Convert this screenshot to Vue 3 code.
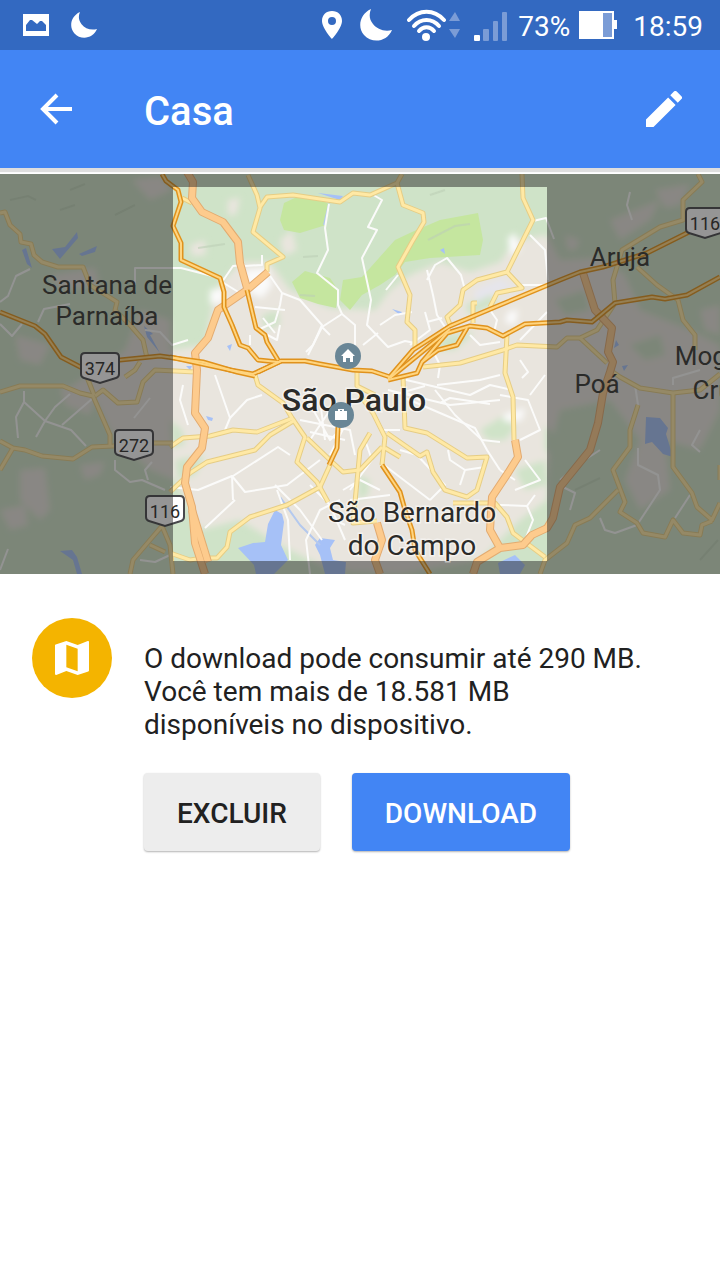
<script setup>
import { ref } from "vue";

const title = ref("Casa");
const downloadSize = ref("290 MB");
const freeSpace = ref("18.581 MB");

// main highways, dark orange casing
const motorways = [
  "M162 174L166 181L178 190L181 202L173 226L181 243V260L220 278L224 292V307L232 325L240 345L248 348L258 360L278 362",
  "M247 290L256 328L265 335L267 342L278 360",
  "M0 312L35 326L45 334L61 357L90 372L120 360L160 356L203 362L237 372L255 376",
  "M170 357L230 370L253 374L281 361H305L320 364L353 370L372 371L390 377",
  "M258 372L281 361",
  "M388 379L413 350L450 326L500 305L560 280L580 272L603 267L647 253L687 233L720 215",
  "M390 378L450 329",
  "M388 380L417 373L422 362L447 333L470 326L487 328L503 336L525 324L560 322L567 320L592 322L615 303L652 297L665 299L687 295L720 277",
  "M467 328L457 345L438 350L422 362",
  "M382 465L400 492L405 510L412 530L415 550L430 574",
  "M338 427L337 448L329 465",
];

const trunks = [
  "M187 172L193 182L192 198L202 212L223 222L238 242L240 263L247 288",
  "M268 272L247 290L218 310L208 338L195 353L197 370L195 413L205 428L202 448L187 467L185 483L192 507L195 543L205 574",
  "M192 510L208 562",
  "M515 440L518 457L508 473L492 497L490 530L500 548",
  "M473 574L477 562L500 548L523 545L532 535L547 528L553 518L560 487L590 450L598 423L603 393L610 372L613 362L608 352L612 328L595 310L583 273",
  "M377 523L382 540L375 560L380 574",
];

const avenues = [
  "M0 213L5 212L10 225L20 234L21 242L31 244L34 255L42 262L58 267H83L90 285L117 302L115 310L130 325L143 340L147 358",
  "M248 175L257 195L260 208L253 232L283 257L267 264V272",
  "M260 207L267 197L293 195L340 202L353 193L370 195L397 183L402 174",
  "M397 183L403 205L423 213L424 222L412 242L398 267L410 295L407 322L415 330V350",
  "M522 174L523 198L533 220L507 272L477 280L463 290L460 305L447 317L450 325",
  "M507 272L522 288L497 293L490 307",
  "M477 303H473V323",
  "M423 367L460 363L503 350L517 345L557 347L567 338H580L597 330L615 303L613 280L622 250L660 227L683 220V200L702 182L698 174",
  "M637 267L657 285L678 300L683 320L695 335V350",
  "M580 338L607 363",
  "M182 198L192 203",
  "M507 335L505 373L513 397L514 440",
  "M403 377L405 428L427 433L467 458L487 457L477 490L467 497L445 490L433 472L427 452L420 456L387 433",
  "M360 395L373 413L385 437L382 465",
  "M382 447L360 470L343 472L330 460L307 438",
  "M385 448L400 457",
  "M453 503H495L507 517L513 533L545 557",
  "M170 447L183 438L210 436L233 430L257 432L293 418",
  "M170 492L190 473L207 462L255 450L270 435L295 420",
  "M255 375L258 385L283 403L292 418L305 437L297 462L317 482L328 502",
  "M330 465L320 487L287 505L250 517L230 532L227 547L217 558H203L190 560L170 553",
  "M370 433L360 450L353 523L377 521",
  "M357 370V386L375 395",
  "M0 392L20 386H63L80 393L93 396L110 435V447",
  "M95 396L103 390L118 403L137 402L143 382L155 370L195 372",
  "M0 441L13 448L25 450L42 456L73 459L92 447L113 446L153 443L173 443",
  "M13 448L0 470",
  "M85 372L94 395M125 377L135 370L140 362",
  "M130 574L133 560L150 540L162 526L170 545L173 574M150 545L165 552",
  "M610 370L620 377L640 388L673 393L700 390L720 374",
  "M673 393V467L692 493L697 507L712 520L720 503M720 465V480",
  "M712 521L702 525L700 535L683 533L673 520L665 537L643 533L637 523L620 512L625 502L613 470L630 447V430L638 405",
  "M618 490L590 518L575 525L567 543L545 560L540 574",
];

const streets = [
  "M0 302L8 296L16 276L30 269M0 324L12 336L22 324M38 322L44 309L70 304",
  "M135 285V268H181L220 278M145 330L160 332L172 345L188 340",
  "M24 391V402L45 421L36 437M24 402L16 417L18 438M45 421L55 407L70 394M45 421L71 430L86 446M62 425L93 398",
  "M115 460V470L130 482L142 480L165 490M152 462L145 470L148 480M134 418L150 398",
  "M183 385L180 400L188 425M215 375L222 395L230 418L225 430M230 418L247 400L262 395",
  "M170 487L198 490L232 476L245 492L287 485L320 460M232 476L233 500M233 476L278 447L290 455",
  "M205 528L235 500M275 485L300 510L322 540M277 490L288 520L290 560M340 500L320 510L306 540L310 574",
  "M222 282L233 266L245 265M245 266L262 265L262 255M222 282L240 293M268 273L282 293L300 300L322 325L313 345L306 352",
  "M282 293L280 305L275 322L258 330M258 330L277 340L280 325M285 310L255 307M263 318L275 333M250 335V345",
  "M329 204L325 228L328 250L317 273L338 290V305L342 314L355 325V345L348 355M342 314L322 327L330 335M322 327L308 355",
  "M370 193L382 200L368 227L377 230L362 258L371 300L367 325L388 347L405 341L415 343M380 325L395 315L412 312M363 345L378 333",
  "M427 280L435 265L447 258L461 275L465 290M398 275L386 290M427 270L433 295L437 315L445 327M425 312L430 330L410 345M427 322L442 318",
  "M530 235L545 250L548 280M533 221L546 218L554 239M522 285H547M490 310L497 320L494 332M547 312L520 340",
  "M388 390L450 405L500 400M398 378L470 395L490 385L512 390M440 403L450 398L490 404M393 395L425 386M405 398L475 428L487 450L500 470",
  "M435 390L455 415L482 440L500 442M400 430L384 430M448 450L450 460L465 470L485 467M465 470L460 485M400 450L417 455L445 485L430 500M384 465L430 500",
  "M500 395L528 400L540 430L520 440M525 460L540 480L515 490M500 505L527 506L535 495M527 506L533 520L525 540M500 470L515 480M545 375L530 395",
  "M305 395L330 440L350 420M320 400L325 440M300 420L350 430L355 455M310 432L345 440M330 410L310 440M345 425L330 455",
  "M343 490L360 480L380 490M310 485L330 505L345 540M335 520L345 525M350 500L390 495M365 440L372 460L350 490",
  "M630 192L627 205L632 220M600 450L580 463L560 480M563 487L575 493L570 510M600 518L605 530L615 533L637 525L660 490L658 475L638 465V448M638 405L635 385M673 385V378L700 370M675 518L690 495M700 430L692 445L700 452",
  "M140 560L155 562L170 555M0 570L8 549M430 345L440 365L438 378M470 335L480 345L500 342M520 360L528 372L522 378M437 385L480 380L500 375M405 392L420 400",
];

const labels = [
  { x: 107, y: 294, text: "Santana de" },
  { x: 107, y: 325, text: "Parnaíba" },
  { x: 620, y: 266, text: "Arujá" },
  { x: 597, y: 393, text: "Poá" },
  { x: 704, y: 365, text: "Mogi" },
  { x: 719, y: 399, text: "Cruz" },
];

const shields = [
  { x: 100, y: 368, text: "374" },
  { x: 134, y: 445, text: "272" },
  { x: 165, y: 511, text: "116" },
  { x: 705, y: 223, text: "116" },
];
</script>

<template>
  <div class="screen">
    <div class="status-bar">
      <svg class="picture-icon" width="26" height="22" viewBox="0 0 26 22">
        <path fill="#fff" fill-rule="evenodd" d="M0 0H26V22H0ZM3 17H23V11L19 7H17L14 10L9 6H7L3 11Z" />
      </svg>
      <svg class="small-moon" width="26" height="26" viewBox="0 0 32 32">
        <path fill="#fff" d="M11 0C0 5-3 18 4 26C12 35 27 33 32 21C24 23 17 20 13 15C9 10 9 5 11 0Z" />
      </svg>
      <svg class="pin-icon" width="20" height="28" viewBox="0 0 20 28">
        <path fill="#fff" fill-rule="evenodd" d="M10 0C4 0 0 4 0 10C0 17 10 28 10 28S20 17 20 10C20 4 16 0 10 0ZM10 6A4 4 0 1 1 10 14A4 4 0 1 1 10 6Z" />
      </svg>
      <svg class="moon-icon" width="32" height="32" viewBox="0 0 32 32">
        <path fill="#fff" d="M11 0C0 5-3 18 4 26C12 35 27 33 32 21C24 23 17 20 13 15C9 10 9 5 11 0Z" />
      </svg>
      <svg class="wifi-icon" width="54" height="32" viewBox="0 0 54 32">
        <g fill="none" stroke="#fff" stroke-width="4" stroke-linecap="round">
          <path d="M2 11C12 0 27 0 37 11" />
          <path d="M7 17C14 9 25 9 32 17" />
          <path d="M12 22C16 17 23 17 27 22" />
        </g>
        <circle cx="19" cy="28" r="4" fill="#fff" />
        <path fill="#7b9cd6" d="M42 12L48 3L53 12ZM42 20H53L48 29Z" />
      </svg>
      <svg class="signal-icon" width="34" height="30" viewBox="0 0 34 30">
        <rect x="0" y="23" width="6" height="6" rx="1" fill="#fff" />
        <g fill="#7b9cd6">
          <rect x="9" y="17" width="6" height="12" rx="1" />
          <rect x="19" y="9" width="5" height="20" rx="1" />
          <rect x="28" y="0" width="5" height="29" rx="1" />
        </g>
      </svg>
      <span class="percent">73%</span>
      <svg class="battery-icon" width="38" height="28" viewBox="0 0 38 28">
        <rect x="1" y="1" width="33" height="26" fill="#7b9cd6" stroke="#fff" stroke-width="2" />
        <path fill="#fff" d="M0 0H24V28H0ZM34 9H38V18H34Z" />
      </svg>
      <span class="clock">18:59</span>
    </div>

    <header class="toolbar">
      <button class="icon-button" type="button" aria-label="Voltar">
        <svg width="32" height="32" viewBox="0 0 32 32">
          <path fill="none" stroke="#fff" stroke-width="4" d="M32 16H3M17 2L3 16L17 30" />
        </svg>
      </button>
      <h1>{{ title }}</h1>
      <button class="icon-button" type="button" aria-label="Editar">
        <svg width="36" height="36" viewBox="3 3 18 18">
          <path fill="#fff" d="M3 17.25V21h3.750L17.810 9.940l-3.750-3.750L3 17.250zM20.710 7.040a1 1 0 0 0 0-1.410l-2.340-2.340a1 1 0 0 0-1.410 0l-1.830 1.830 3.750 3.750 1.830-1.830z" />
        </svg>
      </button>
    </header>

    <svg class="map" viewBox="0 174 720 400" preserveAspectRatio="xMidYMid slice">
      <defs>
        <filter id="soft" x="-5%" y="-5%" width="110%" height="110%">
          <feGaussianBlur stdDeviation="3" />
        </filter>
      </defs>
      <rect y="174" width="720" height="400" fill="#cfe3c8" />
      <g filter="url(#soft)">
        <path
          fill="#e9e5de"
          d="M170 350L205 345L215 290L240 262L270 262L290 290L330 308L375 310L390 290L410 275L440 262L470 272L500 262L515 240L547 235L560 260L600 258L625 275L640 310L690 330L720 345V410L700 450L665 440L670 490L640 510L625 480L640 440L610 400L560 410L550 450L547 500L520 520L480 560L400 574L330 570L280 545L240 520L200 530L175 480L150 470L110 430L95 400L60 395L80 380L125 350L140 310L170 320Z"
        />
        <g fill="#e9e5de">
          <path d="M60 385L95 395L90 415L65 405ZM20 470L45 468L50 510L40 520L20 500ZM0 510L25 505L28 525L10 530ZM80 465L105 462L100 475L85 480ZM15 335L50 345L40 365L20 360ZM50 275L95 268L100 285L60 290Z" />
          <path d="M132 180L160 176L172 190L150 200ZM228 200L240 198L236 215L228 215ZM280 240L292 230L297 250L284 256ZM190 245L205 240L206 255L192 256ZM655 190L690 184L680 205L665 208ZM565 235L580 240L575 250L568 250ZM610 220L660 200L650 220L620 240ZM700 310L720 305V335L705 330Z" />
        </g>
        <g fill="#cfe3c8">
          <path d="M480 430L505 415L515 428L505 440L488 440ZM515 470L545 460L547 485L525 490ZM465 305L490 295L500 303L470 315ZM445 335L475 332L455 350L435 350ZM170 420L182 430L185 445L172 448ZM175 460L205 455L195 475L178 480ZM545 425L560 440L560 460L545 450ZM358 475L370 480L368 495L358 500ZM555 300L585 290L590 310L565 315ZM630 345L660 335L665 355L645 360ZM262 315L278 310L280 325L265 330Z" />
        </g>
        <path fill="#fafafa" d="M245 270L268 268L272 285L262 298L245 290ZM210 290L224 288V302L210 304ZM508 238L515 233L520 250L510 255ZM503 415L525 408L522 420L505 422ZM508 312L518 310L515 325L505 322Z" />
        <path fill="#e5e5ec" d="M475 290L500 279L515 287L495 293L475 303Z" />
      </g>
      <path fill="#c5e69f" d="M284 203L297 197L325 202L330 205L326 225L300 233L284 230L280 220ZM292 282L305 271L330 278L338 290L336 308L318 304L300 298ZM343 280L362 277L395 240L412 232L440 220L478 213L483 240L480 255L430 258L405 262L395 275L380 285L362 295L350 310L340 300Z" />
      <g fill="none" stroke="#bccfb6" stroke-width="2" opacity=".6">
        <path d="M10 200L28 196L36 200M70 190L85 184M115 215L135 205M60 210L75 205M198 248L225 244M303 257L318 256M300 295L315 296M428 240L455 226L470 224M430 195L445 190M700 560L718 540M575 490L600 478" />
      </g>
      <g fill="#a6c1f7">
        <path d="M52 249L65 247L77 232L78 238L60 259ZM79 254L97 246L95 252L82 256ZM22 250L26 248L32 268L27 264ZM144 326L153 334L150 335L160 353L147 337Z" />
        <path d="M275 510L282 514L284 522L281 545L288 560L274 574H256L254 565L238 548L253 543L265 542L268 524ZM320 538L335 540L330 548L333 560L346 562L345 574H325L320 555L315 545Z" />
        <path d="M646 417L660 418L668 428L666 434L673 457L663 454L652 442L645 444ZM60 551L72 550L77 557L82 574H77L73 560ZM498 563L515 555L525 565L520 574H500ZM227 346L232 344L230 351ZM206 416L213 418L212 421L208 420ZM186 366L192 366L190 370ZM440 250L444 248L445 254ZM318 193L343 196L340 200ZM392 309L402 312L400 315ZM616 340L619 345L614 348ZM622 366L628 365L624 371Z" />
      </g>
      <path class="river" d="M329 204L324 225M280 497L300 525L320 545" />
      <g class="street"><path v-for="(d, i) in streets" :key="i" :d="d" /></g>
      <g class="avenue-case"><path v-for="(d, i) in avenues" :key="i" :d="d" /></g>
      <g class="avenue"><path v-for="(d, i) in avenues" :key="i" :d="d" /></g>
      <g class="trunk-case"><path v-for="(d, i) in trunks" :key="i" :d="d" /></g>
      <g class="trunk"><path v-for="(d, i) in trunks" :key="i" :d="d" /></g>
      <g class="motorway-case"><path v-for="(d, i) in motorways" :key="i" :d="d" /></g>
      <g class="motorway"><path v-for="(d, i) in motorways" :key="i" :d="d" /></g>

      <g v-for="(s, i) in shields" :key="i" :transform="`translate(${s.x} ${s.y})`">
        <path fill="#fff" stroke="#48484c" stroke-width="2" d="M-15-15H15Q19-15 19-11V6Q19 9 16 10L0 15L-16 10Q-19 9-19 6V-11Q-19-15-15-15Z" />
        <text class="shield-text" y="7">{{ s.text }}</text>
      </g>

      <!-- everything outside the selected area is darkened -->
      <path fill="#222" fill-opacity=".48" fill-rule="evenodd" d="M0 174H720V574H0ZM173 187V561H547V187Z" />

      <text v-for="l in labels" :key="l.text" class="label" :x="l.x" :y="l.y">{{ l.text }}</text>
      <text class="label large halo" x="412" y="522">São Bernardo</text>
      <text class="label large halo" x="412" y="555">do Campo</text>
      <text class="city halo" x="354" y="411">São Paulo</text>

      <circle cx="348" cy="356" r="13" fill="#698696" />
      <path fill="#fff" d="M348 349L355 356H353V362H350V358H346V362H343V356H341Z" />
      <circle cx="341" cy="415" r="13" fill="#698696" />
      <path fill="#fff" fill-rule="evenodd" d="M338 411V409H344V411H347V420H335V411ZM340 411H342V410H340Z" />
    </svg>

    <main class="details">
      <span class="badge">
        <svg width="34" height="34" viewBox="3 3 18 18">
          <path fill="#fff" fill-rule="evenodd" d="M20.500 3l-.16.030L15 5.100 9 3 3.360 4.900c-.21.070-.36.250-.36.480V20.500c0 .28.220.5.500.5l.16-.03L9 18.900l6 2.100 5.640-1.900c.21-.07.360-.25.360-.48V3.500c0-.28-.22-.5-.5-.5zM15 19l-6-2.110V5l6 2.110V19z" />
        </svg>
      </span>
      <div class="content">
        <p>
          O download pode consumir até {{ downloadSize }}. Você tem mais de
          {{ freeSpace }} disponíveis no dispositivo.
        </p>
        <div class="actions">
          <button class="action" type="button">EXCLUIR</button>
          <button class="action primary" type="button">DOWNLOAD</button>
        </div>
      </div>
    </main>
  </div>
</template>

<style>
body {
  margin: 0;
  background: #fff;
}
</style>

<style scoped>
.screen {
  min-height: 100vh;
  overflow: hidden;
  font-family: Roboto, sans-serif;
  color: #212121;
  background: #fff;
}

.status-bar {
  display: flex;
  align-items: center;
  height: 50px;
  padding: 0 17px 0 23px;
  color: #fff;
  font-size: 28px;
  background: #3369c1;
}

.status-bar svg {
  flex: none;
}

.small-moon {
  margin-left: 22px;
}

.pin-icon {
  margin-left: auto;
}

.moon-icon {
  margin-left: 18px;
}

.wifi-icon {
  margin-left: 15px;
}

.signal-icon {
  margin-top: 4px;
  margin-left: 13px;
}

.percent,
.clock {
  padding-top: 2px;
}

.percent {
  margin-left: 10px;
}

.battery-icon {
  margin-left: 9px;
}

.clock {
  margin-left: 16px;
}

.toolbar {
  position: relative;
  display: flex;
  align-items: center;
  height: 118px;
  padding: 0 28px;
  margin-bottom: 6px;
  color: #fff;
  background: #4285f4;
  box-shadow: 0 4px 1px #dedede;
}

.toolbar h1 {
  flex: 1;
  margin: 0 0 0 60px;
  padding-top: 4px;
  font-size: 40px;
  font-weight: 500;
}

.icon-button {
  display: flex;
  align-items: center;
  justify-content: center;
  width: 56px;
  height: 56px;
  margin: 0;
  padding: 0;
  border: 0;
  background: none;
}

.icon-button:hover,
.action:hover {
  cursor: pointer;
}

.map {
  display: block;
  width: 100%;
  height: 400px;
}

.street,
.avenue,
.avenue-case,
.trunk,
.trunk-case,
.motorway,
.motorway-case,
.river {
  fill: none;
  stroke-linejoin: round;
}

.river {
  stroke: #b4c9ee;
  stroke-width: 2px;
}

.street {
  stroke: #fbfbfa;
  stroke-width: 2px;
}

.avenue-case {
  stroke: #e6cd85;
  stroke-width: 5px;
}

.avenue {
  stroke: #ffe9a5;
  stroke-width: 3px;
}

.trunk-case {
  stroke: #e3ab70;
  stroke-width: 8px;
}

.trunk {
  stroke: #fdcb8d;
  stroke-width: 6px;
}

.motorway-case {
  stroke: #e0921c;
  stroke-width: 5px;
}

.motorway {
  stroke: #ffd580;
  stroke-width: 2px;
}

.label,
.city,
.shield-text {
  text-anchor: middle;
  fill: #2b2b29;
}

.label {
  font-size: 26px;
}

.label.large {
  font-size: 28px;
}

.city {
  font-size: 32px;
  font-weight: 500;
}

.halo {
  paint-order: stroke;
  stroke: rgba(255, 255, 255, 0.5);
  stroke-width: 3px;
}

.shield-text {
  font-size: 18px;
}

.details {
  display: flex;
  gap: 32px;
  padding: 44px 72px 44px 32px;
}

.badge {
  display: flex;
  flex: none;
  align-items: center;
  justify-content: center;
  width: 80px;
  height: 80px;
  border-radius: 50%;
  background: #f4b400;
}

.content {
  padding-top: 24px;
}

.content p {
  margin: 0 0 32px;
  font-size: 28px;
  line-height: 33px;
}

.actions {
  display: flex;
  gap: 32px;
}

.action {
  height: 78px;
  margin: 0;
  padding: 2px 33px 0;
  border: 0;
  border-radius: 4px;
  font-family: inherit;
  font-size: 28px;
  font-weight: 500;
  color: #212121;
  background: #ededed;
  box-shadow: 0 1px 2px rgba(0, 0, 0, 0.3);
}

.action.primary {
  color: #fff;
  background: #4285f4;
}
</style>
